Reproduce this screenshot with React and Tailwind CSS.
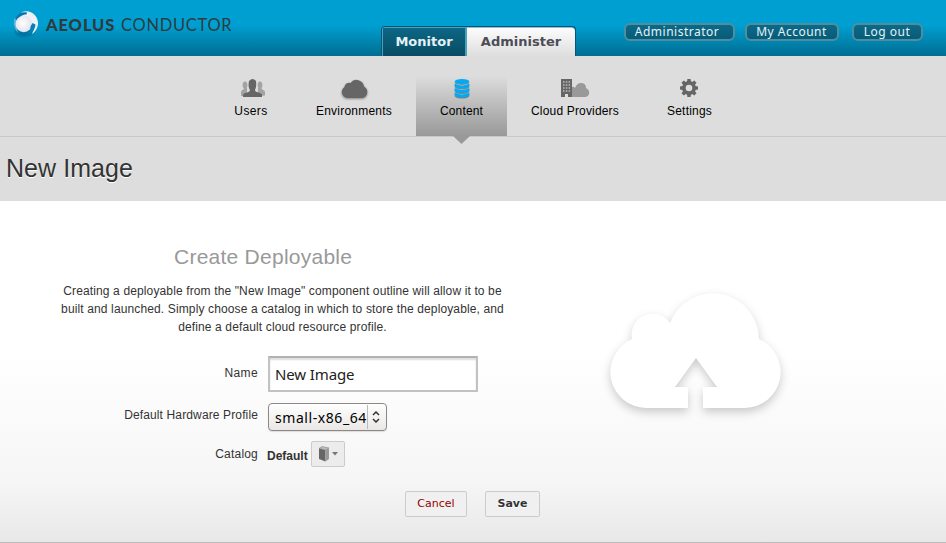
import React from "react";

const SANS = "font-['Liberation_Sans',sans-serif]";
const DEJA = "font-['DejaVu_Sans',sans-serif]";
const NOTO = "font-['Noto_Sans',sans-serif]";

const CLOUD =
  "M36 116A36 36 0 0 1 22 47A21 21 0 0 1 60 31A46 46 0 0 1 149 47A36 36 0 0 1 135 116H93V95H107L86 66L65 95H78V116Z";

function Logo() {
  return (
    <div className="ml-[10px] mt-[9px] flex items-start">
      <svg width="30" height="32" viewBox="0 0 30 32">
        <defs>
          <radialGradient id="orb" cx="0.45" cy="0.45" r="0.6">
            <stop offset="0" stopColor="#ffffff" />
            <stop offset="0.8" stopColor="#e4e6f0" />
            <stop offset="1" stopColor="#d3dbea" />
          </radialGradient>
          <filter id="soft" x="-30%" y="-30%" width="160%" height="160%">
            <feGaussianBlur stdDeviation="1.3" />
          </filter>
        </defs>
        <ellipse cx="14" cy="23" rx="9" ry="5" fill="#00608f" opacity="0.6" filter="url(#soft)" />
        <path d="M4.500 9C3 14 4 20 9 25C6 20 7 16 9 13Z" fill="#5eb4d8" />
        <path d="M12 3C20 0 28 6 28 14C28 19 25 23 22 25C24 21 24.500 18 22 15L16 12L11 7Z" fill="#f0f1f7" />
        <path d="M5.500 10C7 5 12 2.500 17 3.500L16.500 5.500C12 5.500 9 8 7 11Z" fill="#0875af" />
        <circle cx="13.800" cy="15" r="8.300" fill="url(#orb)" />
        <path d="M20.500 17.500L22.500 14L25.500 15.500C25 21 22 25 16.500 25C20 23 20.500 20 20.500 17.500Z" fill="#0780b8" />
      </svg>
      <div className="ml-[6px] mt-[4px] flex h-[24px] items-center whitespace-nowrap font-['Lato',sans-serif] text-[16.5px] text-[#303b40]">
        <span className="w-[75px] font-black tracking-[0.9px]">AEOLUS</span>
        <span className="tracking-[0.7px]">CONDUCTOR</span>
      </div>
    </div>
  );
}

function UserLink({ className, children }) {
  return (
    <a className={`flex h-[18px] items-center justify-center rounded-[6px] border-2 border-[#4f8da0] bg-linear-to-b from-[#0c6987] to-[#075c78] ${NOTO} text-[12px] leading-none text-[#e4f2f7] whitespace-nowrap ${className}`}>
      {children}
    </a>
  );
}

function UsersIcon() {
  return (
    <svg width="26" height="20" viewBox="0 0 26 20">
      <g fill="#a3a3a3">
        <ellipse cx="5" cy="6" rx="2.400" ry="3.500" />
        <path d="M1 16.500V13C1 11 4 11 4 9H7V17H1Z" />
        <ellipse cx="20" cy="6" rx="2.400" ry="3.500" />
        <path d="M25 16.500V13C25 11 21.500 11 21.500 9H18V17Z" />
      </g>
      <path d="M3 18V16C3 13.500 10 14 10 11C8 8 8.500 5 9 2Q12.500-2 16 2C16.500 6 16 9 15 11C15 14 22 13 22 16V18Z" fill="#666" />
    </svg>
  );
}

function EnvIcon() {
  return (
    <svg width="28" height="22" viewBox="0 0 28 22" className="drop-shadow-[0_1px_1px_rgba(0,0,0,0.4)]">
      <path d="M6.500 19A6 6 0 0 1 3.500 8A4.500 4.500 0 0 1 9.500 4A7.500 7.500 0 0 1 23 7.500A6.200 6.200 0 0 1 21.500 19Z" fill="#666" />
    </svg>
  );
}

function DatabaseIcon() {
  return (
    <svg width="16" height="20" viewBox="0 0 16 20" className="drop-shadow-[0_1px_0.5px_rgba(0,0,0,0.35)]">
      <g fill="#00aaf5">
        <ellipse cx="8" cy="2.600" rx="7.300" ry="2.500" />
        <path d="M.7 4.500Q8 8.500 15.300 4.500V7.200Q14 9.500 8 9.500Q2 9.500 .7 7.200Z" />
        <path d="M.7 9Q8 13 15.300 9V11.700Q14 14 8 14Q2 14 .7 11.700Z" />
        <path d="M.7 13.500Q8 17.500 15.300 13.500V16.200Q14 18.500 8 18.500Q2 18.500 .7 16.200Z" />
      </g>
    </svg>
  );
}

function ProvidersIcon() {
  return (
    <svg width="30" height="20" viewBox="0 0 30 20">
      <path d="M11 18V8Q14 7 15 9Q17 4 21 4Q26 4 26 9Q30 11 29 15Q28 18 25 18Z" fill="#999" />
      <path d="M1 0H12V18H8V15H5V18H1Z" fill="#666" />
      <g fill="#a5a5a5">
        {[2, 5, 8, 11].map((y) => (
          <g key={y}>
            <rect x="3" y={y} width="1.500" height="2" />
            <rect x="5.800" y={y} width="1.500" height="2" />
            <rect x="8.600" y={y} width="1.500" height="2" />
          </g>
        ))}
      </g>
    </svg>
  );
}

function GearIcon() {
  return (
    <svg width="18" height="18" viewBox="-9 -9 18 18">
      <g fill="#666">
        {[0, 45, 90, 135, 180, 225, 270, 315].map((a) => (
          <path key={a} d="M-2.200-5L-1.600-9H1.600L2.200-5Z" transform={`rotate(${a})`} />
        ))}
      </g>
      <circle r="5.100" fill="none" stroke="#666" strokeWidth="3.600" />
    </svg>
  );
}

function NavItem({ icon, label, className, labelClass }) {
  return (
    <a className={`flex flex-col items-center ${SANS} text-[12px] text-black ${className}`}>
      <span className="mt-[23px] flex h-[22px] items-start justify-center">{icon}</span>
      <span className={`mt-[2px] whitespace-nowrap leading-[16px] ${labelClass}`}>{label}</span>
    </a>
  );
}

export default function App() {
  return (
    <div className={`flex h-[543px] w-[946px] flex-col overflow-hidden bg-white ${SANS} text-[#333]`}>
      <header className="flex h-[56px] shrink-0 bg-linear-to-b from-[#009fd2] from-45% to-[#006e92]">
        <div className="w-[381px] shrink-0">
          <Logo />
        </div>
        <div className={`mt-[26px] flex h-[30px] w-[195px] shrink-0 overflow-hidden rounded-t-[4px] border border-b-0 border-[#075572] ${DEJA} text-[13px] font-bold`}>
          <div className="flex w-[85px] items-center justify-center border-2 border-b-0 border-l-1 border-t-1 border-[#4ba1bb] bg-linear-to-b from-[#0c6786] to-[#084c64] text-[#e6f1f5]">
            Monitor
          </div>
          <div className="flex flex-1 items-center justify-center rounded-tr-[4px] border-t border-[#91bfce] bg-linear-to-b from-[#fcfcfc] to-[#dedede] text-[#4d4d57]">
            Administer
          </div>
        </div>
        <div className="ml-[48px] mt-[23px] flex">
          <UserLink className="w-[111px] pr-[5px] tracking-[0.5px]">Administrator</UserLink>
          <UserLink className="ml-[10px] w-[94px] pr-[1px] tracking-[0.5px]">My Account</UserLink>
          <UserLink className="ml-[13px] w-[71px] pr-px tracking-[0.5px]">Log out</UserLink>
        </div>
      </header>

      <nav className="flex h-[81px] shrink-0 justify-center border-b border-[#c8c8c8] bg-[#ddd]">
        <NavItem className="w-[82px]" icon={<span className="ml-[4px]"><UsersIcon /></span>} label="Users" labelClass="tracking-[0.4px]" />
        <NavItem className="w-[124px]" icon={<span className="ml-[2px]"><EnvIcon /></span>} label="Environments" labelClass="tracking-[0.22px]" />
        <div className="relative w-[91px]">
          <NavItem className="h-full bg-linear-to-b from-[#ddd] from-25% to-[#999]" icon={<DatabaseIcon />} label="Content" labelClass="tracking-[0.15px]" />
          <svg className="absolute left-[37px] top-[80px]" width="17" height="8" viewBox="0 0 17 8">
            <path d="M0 0H17L8.500 8Z" fill="#999" />
          </svg>
        </div>
        <NavItem className="w-[136px]" icon={<ProvidersIcon />} label="Cloud Providers" labelClass="tracking-[0.17px]" />
        <NavItem className="w-[93px]" icon={<span className="mr-[2px]"><GearIcon /></span>} label="Settings" labelClass="tracking-[0.2px]" />
      </nav>

      <div className="flex h-[64px] shrink-0 items-center bg-[#ddd] pb-px pl-[6px]">
        <h1 className="text-[25px] leading-none tracking-[0.05px] [text-shadow:0_1px_0_#fff]">New Image</h1>
      </div>

      <main className="flex flex-1 flex-col border-b border-[#bbb] bg-linear-to-b from-white from-45% via-[#f6f6f6] via-82% to-[#e8e8e8]">
        <div className="flex">
          <form className="w-[565px] shrink-0">
            <h2 className="ml-[174px] mt-[44px] whitespace-nowrap text-[21px] leading-[24px] tracking-[0.25px] text-[#999]">Create Deployable</h2>
            <div className="mt-[13px] w-[565px] text-center text-[12px] leading-[18px] tracking-[0.13px] whitespace-nowrap">
              <p>Creating a deployable from the "New Image" component outline will allow it to be</p>
              <p>built and launched. Simply choose a catalog in which to store the deployable, and</p>
              <p>define a default cloud resource profile.</p>
            </div>
            <div className="mt-[20px] flex h-[36px] text-[12px]">
              <label className="mr-[10px] w-[258px] pt-[8px] text-right leading-[18px] tracking-[0.4px]">Name</label>
              <div className={`flex h-[36px] w-[210px] items-center border-2 border-[#c2c2c2] border-t-[#b2b2b2] bg-white pl-[5px] shadow-[inset_0_2px_2px_#ddd] ${NOTO} text-[15px] tracking-[-0.12px] text-[#222]`}>
                New Image
              </div>
            </div>
            <div className="mt-[10px] flex h-[29px] text-[12px]">
              <label className="mr-[10px] w-[258px] pt-[4px] text-right leading-[18px] tracking-[0.13px]">Default Hardware Profile</label>
              <div className={`mt-px flex h-[28px] w-[119px] items-center rounded-[4px] border border-[#8d8886] bg-linear-to-b from-white to-[#e9e8e6] pl-[6px] shadow-[0_1px_1px_#ddd] ${NOTO} text-[14px] text-black`}>
                <span className="w-[92px] whitespace-nowrap tracking-[0.57px]">small-x86_64</span>
                <span className="h-[24px] w-px bg-[#bbb]" />
                <svg className="ml-[4px]" width="8" height="12" viewBox="0 0 8 12" fill="none" stroke="#333" strokeWidth="1.500">
                  <path d="M1 4L4 1L7 4M1 8L4 11L7 8" />
                </svg>
              </div>
            </div>
            <div className="mt-[10px] flex h-[26px] text-[12px]">
              <label className="mr-[9px] w-[258px] pt-[4px] text-right leading-[18px] tracking-[0.2px]">Catalog</label>
              <strong className="w-[44px] pt-[6px] leading-[18px]">Default</strong>
              <div className="flex h-[26px] w-[34px] items-center rounded-[2px] border border-[#ccc] bg-[#ececec] pl-[6px]">
                <svg width="12" height="16" viewBox="0 0 12 16">
                  <path d="M1 2.500L7.500 4V15.500L1 13Z" fill="#666" />
                  <path d="M1 2.500L4 .5L11 2L7.500 4Z" fill="#bbb" stroke="#777" strokeWidth="0.500" />
                  <path d="M7.500 4L11 2V13L7.500 15.500Z" fill="#999" />
                </svg>
                <svg className="ml-[2px]" width="6" height="4" viewBox="0 0 6 4">
                  <path d="M0 0H6L3 3.500Z" fill="#777" />
                </svg>
              </div>
            </div>
          </form>
          <svg className="ml-[25px] mt-[69px] shrink-0" width="210" height="160" viewBox="-20 -22 210 160">
            <path d={CLOUD} fill="#fff" className="drop-shadow-[0_4px_5px_rgba(0,0,0,0.2)]" />
          </svg>
        </div>
        <div className={`mt-[24px] flex pl-[405px] ${DEJA} text-[11px]`}>
          <button className="flex h-[26px] w-[62px] items-center justify-center rounded-[2px] border border-[#ccc] bg-[#f0f0f0] text-[#990000]">Cancel</button>
          <button className="ml-[18px] flex h-[26px] w-[55px] items-center justify-center rounded-[2px] border border-[#ccc] bg-[#f0f0f0] font-bold [text-shadow:0_1px_0_#fff]">Save</button>
        </div>
      </main>
    </div>
  );
}
